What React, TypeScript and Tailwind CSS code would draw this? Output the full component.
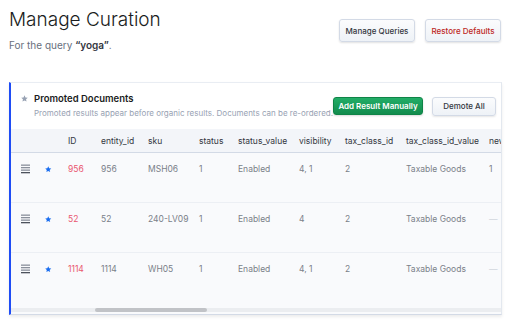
import React from "react";

const cols = [
  { key: "id", label: "ID", w: "w-[33px]" },
  { key: "entity_id", label: "entity_id", w: "w-[47px]" },
  { key: "sku", label: "sku", w: "w-[51px]" },
  { key: "status", label: "status", w: "w-[39px]" },
  { key: "status_value", label: "status_value", w: "w-[61px]" },
  { key: "visibility", label: "visibility", w: "w-[46px]" },
  { key: "tax_class_id", label: "tax_class_id", w: "w-[61px]" },
  { key: "tax_class_id_value", label: "tax_class_id_value", w: "w-[83px]" },
  { key: "new", label: "new_from_date", w: "w-[80px]" },
];

const rows = [
  { id: "956", entity_id: "956", sku: "MSH06", status: "1", status_value: "Enabled", visibility: "4, 1", tax_class_id: "2", tax_class_id_value: "Taxable Goods", new: "1" },
  { id: "52", entity_id: "52", sku: "240-LV09", status: "1", status_value: "Enabled", visibility: "4", tax_class_id: "2", tax_class_id_value: "Taxable Goods", new: "—" },
  { id: "1114", entity_id: "1114", sku: "WH05", status: "1", status_value: "Enabled", visibility: "4, 1", tax_class_id: "2", tax_class_id_value: "Taxable Goods", new: "—" },
];

function Star({ className }: { className?: string }) {
  return (
    <svg viewBox="0 0 16 16" className={className} fill="currentColor">
      <path d="M8 0.8l2.2 4.9 5.3 0.5-4 3.6 1.2 5.2L8 12.3 3.3 15l1.2-5.2-4-3.6 5.3-0.5z" />
    </svg>
  );
}

function Handle() {
  return (
    <svg width="9" height="10" viewBox="0 0 9 10">
      <rect x="0" y="0.5" width="9" height="1.3" fill="#8a909b" />
      <rect x="0" y="3" width="9" height="1.3" fill="#8a909b" />
      <rect x="0" y="5.5" width="9" height="1.3" fill="#8a909b" />
      <rect x="0" y="8" width="9" height="1.3" fill="#4d525c" />
    </svg>
  );
}

export default function App() {
  return (
    <div
      className="w-[512px] h-[335px] bg-white overflow-hidden relative"
      style={{ fontFamily: "Inter, 'Noto Sans', sans-serif" }}
    >
      <div className="flex justify-between pl-[9px] pr-[11px]">
        <div className="pt-[8px]">
          <div className="text-[19px] font-light leading-[24px] text-[#1a1c21]">Manage Curation</div>
          <div className="mt-[6px] text-[10px] leading-[14px] text-[#69707d]">
            For the query <span className="font-semibold text-[#343741]">“yoga”</span>.
          </div>
        </div>
        <div className="flex gap-[10px] pt-[19px]">
          <button className="w-[76px] h-[23px] rounded-[3px] border border-[#d3dae6] bg-linear-to-b from-[#fbfcfd] to-[#eef2f7] shadow-[0_1px_2px_rgba(0,0,0,0.12)] text-[8px] font-medium text-[#343741]">
            Manage Queries
          </button>
          <button className="w-[76px] h-[23px] rounded-[3px] border border-[#d3dae6] bg-linear-to-b from-[#fbfcfd] to-[#eef2f7] shadow-[0_1px_2px_rgba(0,0,0,0.12)] text-[8px] font-medium text-[#bd271e]">
            Restore Defaults
          </button>
        </div>
      </div>

      <div className="ml-[9px] mt-[30px] w-[493px] h-[233px] border-l-2 border-l-[#1f4df5] border-t border-t-[#e9edf3] border-r border-r-[#e3e8ef] border-b border-b-[#d3dae6] shadow-[0_2px_3px_rgba(0,0,0,0.08)] flex flex-col overflow-hidden">
        <div className="h-[46px] flex items-center pl-[10px] pr-[9px] bg-white shrink-0">
          <div className="flex-1 flex">
            <div className="w-[13px] pt-[2px]">
              <Star className="w-[7px] h-[7px] text-[#98a2b3]" />
            </div>
            <div>
              <div className="text-[9.5px] leading-[12px] font-semibold text-[#1a1c21]">Promoted Documents</div>
              <div className="mt-[3px] text-[8px] leading-[11px] text-[#98a2b3] whitespace-nowrap">
                Promoted results appear before organic results. Documents can be re-ordered.
              </div>
            </div>
          </div>
          <div className="flex gap-[9px] items-center">
            <button className="w-[90px] h-[18px] rounded-[3px] border border-[#0f8447] bg-linear-to-b from-[#22ad67] to-[#128c4d] text-white text-[8px] font-semibold shadow-[0_1px_2px_rgba(0,0,0,0.15)]">
              Add Result Manually
            </button>
            <button className="w-[64px] h-[19px] rounded-[3px] border border-[#d3dae6] bg-linear-to-b from-[#fbfcfd] to-[#eef2f7] text-[#343741] text-[8px] font-medium shadow-[0_1px_2px_rgba(0,0,0,0.1)]">
              Demote All
            </button>
          </div>
        </div>

        <div className="flex-1 bg-[#f9fafc] relative overflow-hidden">
          <div className="h-[24px] flex items-center pt-[1px] pl-[10px] bg-[#f3f5f9] border-b border-[#d3dae6] text-[8.5px] text-[#343741] whitespace-nowrap overflow-hidden">
            <div className="w-[24px] shrink-0" />
            <div className="w-[23px] shrink-0" />
            {cols.map((c) => (
              <div key={c.key} className={`${c.w} shrink-0`}>
                {c.label}
              </div>
            ))}
          </div>
          {rows.map((r, i) => (
            <div
              key={i}
              className={`h-[50px] flex items-start pt-[10px] pl-[10px] text-[8.5px] leading-[12px] text-[#7a7f89] whitespace-nowrap overflow-hidden ${i < 2 ? "border-b border-[#eceff4]" : ""}`}
            >
              <div className="w-[24px] shrink-0 pt-[1px]">
                <Handle />
              </div>
              <div className="w-[23px] shrink-0 pt-[3px]">
                <Star className="w-[6.5px] h-[6.5px] text-[#1a6ef0]" />
              </div>
              {cols.map((c) => {
                const v = (r as Record<string, string>)[c.key];
                let cls = "";
                if (c.key === "id") cls = "text-[#e9566f]";
                if (v === "—") cls = "text-[#d3d7de]";
                return (
                  <div key={c.key} className={`${c.w} shrink-0 ${cls}`}>
                    {v}
                  </div>
                );
              })}
            </div>
          ))}
          <div className="absolute left-0 right-0 bottom-[2px] h-[4px] bg-[#ebedf0]">
            <div className="absolute left-[84px] w-[112px] h-[4px] rounded-full bg-[#c1c3c7]" />
          </div>
        </div>
      </div>
    </div>
  );
}
